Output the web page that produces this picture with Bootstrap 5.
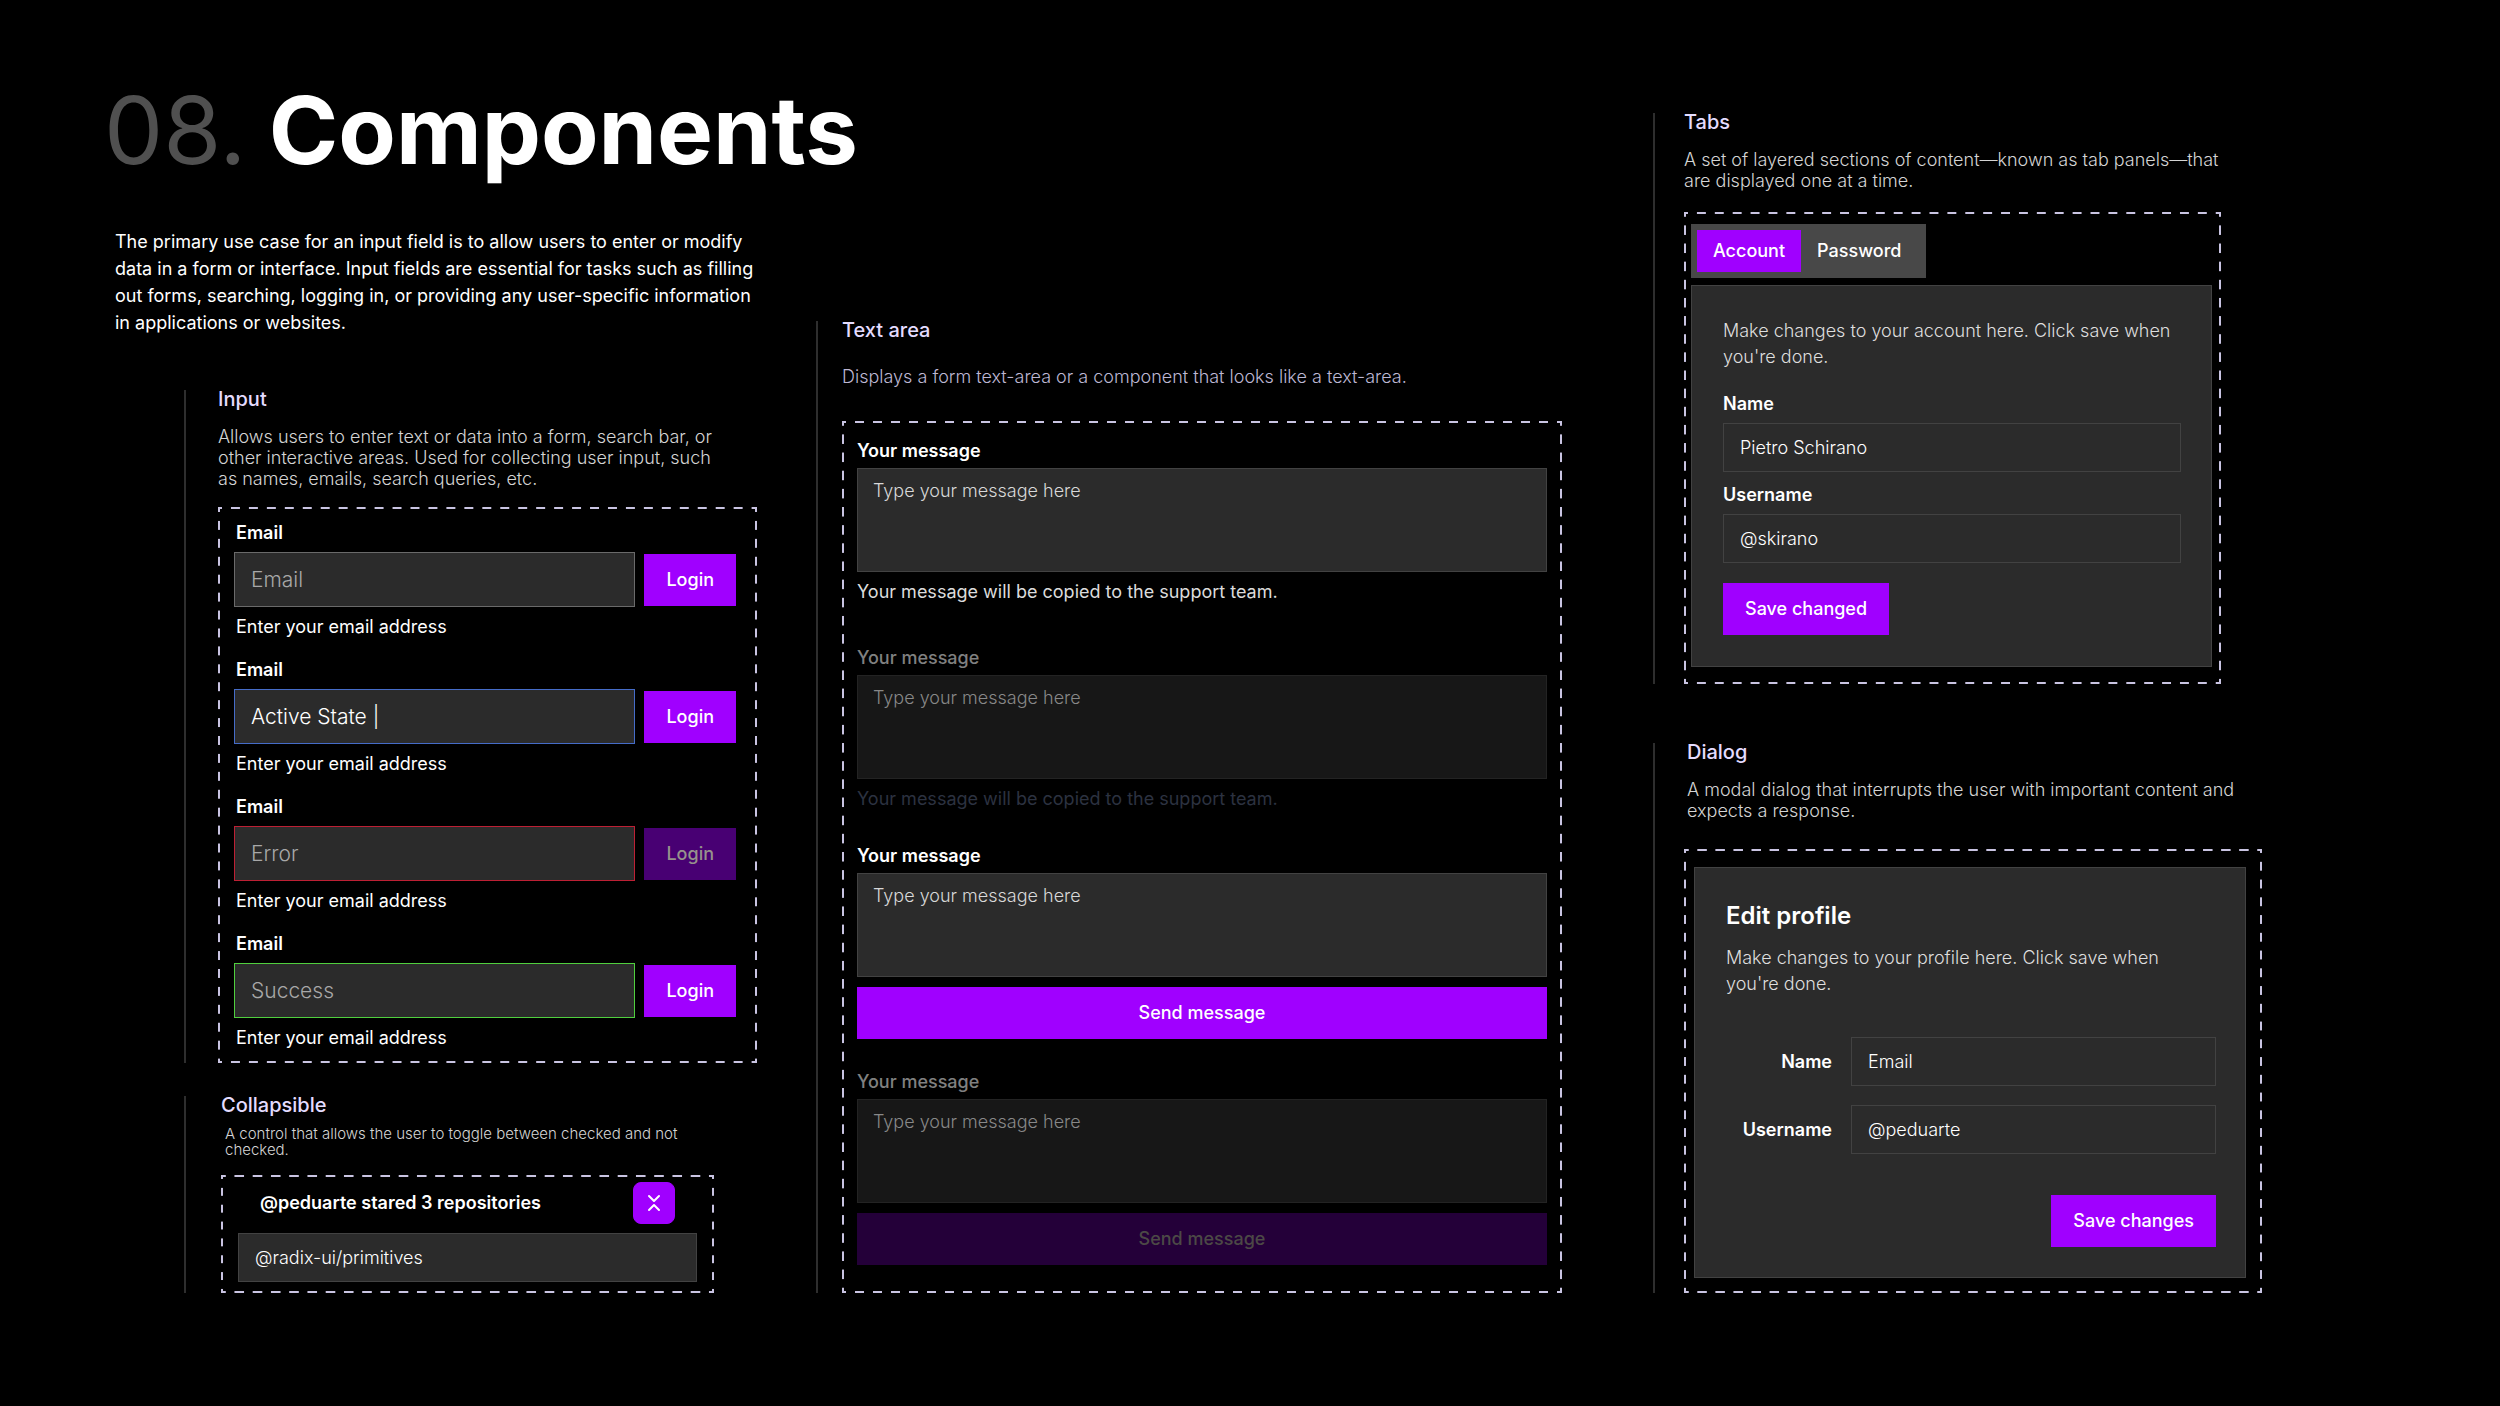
<!DOCTYPE html>
<html lang="en">
<head>
<meta charset="utf-8">
<meta name="viewport" content="width=device-width, initial-scale=1">
<title>08. Components</title>
<link href="https://cdn.jsdelivr.net/npm/bootstrap@5.3.0/dist/css/bootstrap.min.css" rel="stylesheet">
<style>
  :root {
    --accent: #a000ff;
    --surface: #2b2b2b;
    --edge: #424242;
    --rule: #2e2e2e;
    --dash: #c9c4e2;
    --lilac: #e4dcff;
  }
  body {
    background: #000;
    color: #fff;
    font-family: Inter, "Liberation Sans", sans-serif;
    font-size: 18px;
    line-height: 20px;
  }
  .board {
    display: grid;
    grid-template-columns: minmax(0, 712fr) minmax(0, 837fr) minmax(0, 847fr);
    padding: 84px 0 113px 104px;
  }
  .board-a { padding-right: 59px; }
  .board-b { padding: 237px 91px 0 0; }
  .board-c { padding: 29px 238px 0 0; }

  .page-title { font-size: 94px; line-height: 92px; font-weight: 700; margin: 0 0 52px; white-space: nowrap; }
  .page-title span { font-weight: 400; color: #505050; }
  .intro { max-width: 660px; line-height: 27px; margin: 0 0 54px 11px; }

  .spec { border-left: 2px solid var(--rule); }
  .spec-title { font-size: 20px; line-height: 18px; font-weight: 500; color: var(--lilac); margin: 0; }
  .spec-text { font-size: 18px; line-height: 21px; font-weight: 300; color: #d4d4d4; margin: 18px 0; }
  .spec-input, .spec-fold { margin-left: 80px; }
  .spec-input { padding-left: 32px; }
  .spec-input .spec-text { max-width: 505px; }
  .spec-fold { margin-top: 33px; padding: 0 43px 0 35px; }
  .spec-fold .spec-text { font-size: 15px; line-height: 16px; margin: 12px 0 17px 4px; }
  .spec-area { padding-left: 24px; }
  .spec-area .spec-text { margin: 27px 0 34px; color: #bdb7d3; }
  .spec-tabs { padding: 0 41px 0 29px; }
  .spec-tabs .spec-text { margin-bottom: 21px; }
  .spec-dialog { margin-top: 59px; padding-left: 29px; }
  .spec-dialog .spec-title, .spec-dialog .spec-text { margin-left: 3px; }
  .spec-dialog .spec-text { margin-bottom: 28px; max-width: 565px; }

  /* Dashed frame: half dashes meet at each corner */
  .frame {
    --h: linear-gradient(90deg, var(--dash) 25%, transparent 25% 75%, var(--dash) 75%);
    --v: linear-gradient(var(--dash) 25%, transparent 25% 75%, var(--dash) 75%);
    background-image: var(--h), var(--h), var(--v), var(--v);
    background-position: 0 0, 0 100%, 0 0, 100% 0;
    background-size: 18px 2px, 18px 2px, 2px 18px, 2px 18px;
    background-repeat: round no-repeat, round no-repeat, no-repeat round, no-repeat round;
  }

  .field-label { display: block; font-weight: 600; margin: 0; }
  .form-control, .form-control:focus, .form-control:disabled {
    background: var(--surface);
    border: 1px solid var(--edge);
    border-radius: 0;
    box-shadow: none;
    color: #fff;
    font-size: 18px;
    line-height: 20px;
    font-weight: 300;
    height: 49px;
    padding: 0 16px;
  }
  .form-control::placeholder { color: #d8d8d8; opacity: 1; }
  .btn-accent {
    --bs-btn-color: #fff;
    --bs-btn-bg: var(--accent);
    --bs-btn-border-color: var(--accent);
    --bs-btn-hover-color: #fff;
    --bs-btn-hover-bg: #8f00e6;
    --bs-btn-active-color: #fff;
    --bs-btn-active-bg: #8000cc;
    --bs-btn-disabled-color: #97928c;
    --bs-btn-disabled-bg: #480073;
    --bs-btn-disabled-border-color: #480073;
    --bs-btn-disabled-opacity: 1;
    --bs-btn-border-radius: 0;
    --bs-btn-font-size: 18px;
    --bs-btn-line-height: 20px;
    --bs-btn-font-weight: 500;
    --bs-btn-padding-x: 21px;
    --bs-btn-padding-y: 15px;
  }

  /* Input */
  .input-frame { padding: 16px 21px 15px 16px; display: grid; gap: 23px; }
  .input-line { display: flex; align-items: center; gap: 9px; margin: 9px 0 10px; }
  .input-line .form-control { height: 55px; font-size: 21px; line-height: 24px; flex: 1; min-width: 0; border-color: #6a6a6a; }
  .input-line .form-control::placeholder { color: #a8a8a8; }
  .input-line .form-control.state-active { border-color: #456cc8; }
  .input-line .form-control.state-error { border-color: #bd2034; }
  .input-line .form-control.state-success { border-color: #50d03e; }
  .inset { padding-left: 2px; }

  /* Collapsible */
  .fold-frame { padding: 7px 17px 11px; }
  .fold-head { padding: 0 22px; margin-bottom: 9px; }
  .btn-fold { width: 42px; height: 42px; border-radius: 8px; padding: 0; line-height: 0; }

  /* Text area */
  .area-frame { padding: 20px 15px 28px; }
  .area-group .form-control { height: 104px; padding: 12px 15px; resize: none; margin: 7px 0 10px; }
  .area-group:nth-child(2) { margin: 46px 0 37px; }
  .area-group:nth-child(4) { margin-top: 33px; }
  .area-help { color: #dcdcdc; }
  .is-off .field-label { color: #808080; font-weight: 500; }
  .is-off .form-control:disabled { background: #171717; border-color: #232323; }
  .is-off .form-control::placeholder { color: #888; }
  .is-off .area-help { color: #2c3240; }
  .is-off .btn-accent {
    --bs-btn-disabled-color: #4c4946;
    --bs-btn-disabled-bg: #240039;
    --bs-btn-disabled-border-color: #240039;
  }

  /* Tabs and dialog */
  .tabs-frame { padding: 12px 9px 17px 7px; }
  .dialog-frame { padding: 18px 16px 15px 10px; }
  .tab-strip { background: #484848; padding: 6px; width: 235px; margin-bottom: 7px; }
  .tab-strip .nav-link { color: #fff; font-weight: 500; line-height: 20px; padding: 11px 16px; border-radius: 0; }
  .tab-strip .nav-link.active { background: var(--accent); }
  .pane { background: var(--surface); border: 1px solid var(--edge); }
  .pane-text { line-height: 26px; font-weight: 300; color: #dedede; margin: 0; }
  .pane-title { font-size: 24px; line-height: 28px; font-weight: 600; margin: 0 0 15px; }
  .tab-pane-box { padding: 32px 30px 31px 31px; }
  .tab-pane-box .field-label { margin: 13px 0 9px; }
  .tab-pane-box .pane-text + .field-label { margin-top: 24px; }
  .tab-pane-box .btn { margin-top: 20px; }
  .dialog-box { padding: 34px 29px 30px 31px; }
  .dialog-box .pane-text { max-width: 470px; margin-bottom: 40px; }
  .dialog-row { display: grid; grid-template-columns: 106px minmax(0, 1fr); column-gap: 19px; align-items: center; }
  .dialog-row + .dialog-row { margin: 19px 0 41px; }
</style>
</head>
<body>
<main class="board">

  <div class="board-a">
    <h1 class="page-title"><span>08.</span> Components</h1>
    <p class="intro">The primary use case for an input field is to allow users to enter or modify data in a form or interface. Input fields are essential for tasks such as filling out forms, searching, logging in, or providing any user-specific information in applications or websites.</p>

    <section class="spec spec-input">
      <h2 class="spec-title">Input</h2>
      <p class="spec-text">Allows users to enter text or data into a form, search bar, or other interactive areas. Used for collecting user input, such as names, emails, search queries, etc.</p>
      <div class="frame input-frame">
        <div>
          <label class="field-label inset" for="email1">Email</label>
          <div class="input-line">
            <input id="email1" type="email" class="form-control" placeholder="Email">
            <button type="button" class="btn btn-accent">Login</button>
          </div>
          <div class="inset">Enter your email address</div>
        </div>
        <div>
          <label class="field-label inset" for="email2">Email</label>
          <div class="input-line">
            <input id="email2" type="text" class="form-control state-active" value="Active State |">
            <button type="button" class="btn btn-accent">Login</button>
          </div>
          <div class="inset">Enter your email address</div>
        </div>
        <div>
          <label class="field-label inset" for="email3">Email</label>
          <div class="input-line">
            <input id="email3" type="email" class="form-control state-error" placeholder="Error">
            <button type="button" class="btn btn-accent" disabled>Login</button>
          </div>
          <div class="inset">Enter your email address</div>
        </div>
        <div>
          <label class="field-label inset" for="email4">Email</label>
          <div class="input-line">
            <input id="email4" type="email" class="form-control state-success" placeholder="Success">
            <button type="button" class="btn btn-accent">Login</button>
          </div>
          <div class="inset">Enter your email address</div>
        </div>
      </div>
    </section>

    <section class="spec spec-fold">
      <h2 class="spec-title">Collapsible</h2>
      <p class="spec-text">A control that allows the user to toggle between checked and not checked.</p>
      <div class="frame fold-frame">
        <div class="fold-head d-flex justify-content-between align-items-center">
          <label class="field-label" for="repo">@peduarte stared 3 repositories</label>
          <button type="button" class="btn btn-accent btn-fold" aria-label="Toggle">
            <svg width="16" height="20" viewBox="0 0 16 20" fill="none" stroke="#fff" stroke-width="2" stroke-linecap="round" stroke-linejoin="round"><path d="M3 3 8 8 13 3M3 17 8 12 13 17"/></svg>
          </button>
        </div>
        <input id="repo" type="text" class="form-control" value="@radix-ui/primitives">
      </div>
    </section>
  </div>

  <div class="board-b">
    <section class="spec spec-area">
      <h2 class="spec-title">Text area</h2>
      <p class="spec-text">Displays a form text-area or a component that looks like a text-area.</p>
      <div class="frame area-frame">
        <div class="area-group">
          <label class="field-label" for="msg1">Your message</label>
          <textarea id="msg1" class="form-control" placeholder="Type your message here"></textarea>
          <div class="area-help">Your message will be copied to the support team.</div>
        </div>
        <div class="area-group is-off">
          <label class="field-label" for="msg2">Your message</label>
          <textarea id="msg2" class="form-control" placeholder="Type your message here" disabled></textarea>
          <div class="area-help">Your message will be copied to the support team.</div>
        </div>
        <div class="area-group">
          <label class="field-label" for="msg3">Your message</label>
          <textarea id="msg3" class="form-control" placeholder="Type your message here"></textarea>
          <button type="button" class="btn btn-accent w-100">Send message</button>
        </div>
        <div class="area-group is-off">
          <label class="field-label" for="msg4">Your message</label>
          <textarea id="msg4" class="form-control" placeholder="Type your message here" disabled></textarea>
          <button type="button" class="btn btn-accent w-100" disabled>Send message</button>
        </div>
      </div>
    </section>
  </div>

  <div class="board-c">
    <section class="spec spec-tabs">
      <h2 class="spec-title">Tabs</h2>
      <p class="spec-text">A set of layered sections of content—known as tab panels—that are displayed one at a time.</p>
      <div class="frame tabs-frame">
        <div class="nav nav-pills tab-strip" role="tablist">
          <button class="nav-link active" type="button" role="tab" aria-selected="true">Account</button>
          <button class="nav-link" type="button" role="tab" aria-selected="false">Password</button>
        </div>
        <div class="pane tab-pane-box">
          <p class="pane-text">Make changes to your account here. Click save when you're done.</p>
          <label class="field-label" for="acc-name">Name</label>
          <input id="acc-name" type="text" class="form-control" value="Pietro Schirano">
          <label class="field-label" for="acc-user">Username</label>
          <input id="acc-user" type="text" class="form-control" value="@skirano">
          <button type="button" class="btn btn-accent">Save changed</button>
        </div>
      </div>
    </section>

    <section class="spec spec-dialog">
      <h2 class="spec-title">Dialog</h2>
      <p class="spec-text">A modal dialog that interrupts the user with important content and expects a response.</p>
      <div class="frame dialog-frame">
        <div class="pane dialog-box" role="dialog" aria-labelledby="dlg-title">
          <h3 class="pane-title" id="dlg-title">Edit profile</h3>
          <p class="pane-text">Make changes to your profile here. Click save when you're done.</p>
          <div class="dialog-row">
            <label class="field-label text-end" for="dlg-name">Name</label>
            <input id="dlg-name" type="text" class="form-control" value="Email">
          </div>
          <div class="dialog-row">
            <label class="field-label text-end" for="dlg-user">Username</label>
            <input id="dlg-user" type="text" class="form-control" value="@peduarte">
          </div>
          <div class="text-end">
            <button type="button" class="btn btn-accent">Save changes</button>
          </div>
        </div>
      </div>
    </section>
  </div>

</main>
<script src="https://cdn.jsdelivr.net/npm/bootstrap@5.3.0/dist/js/bootstrap.bundle.min.js"></script>
</body>
</html>
